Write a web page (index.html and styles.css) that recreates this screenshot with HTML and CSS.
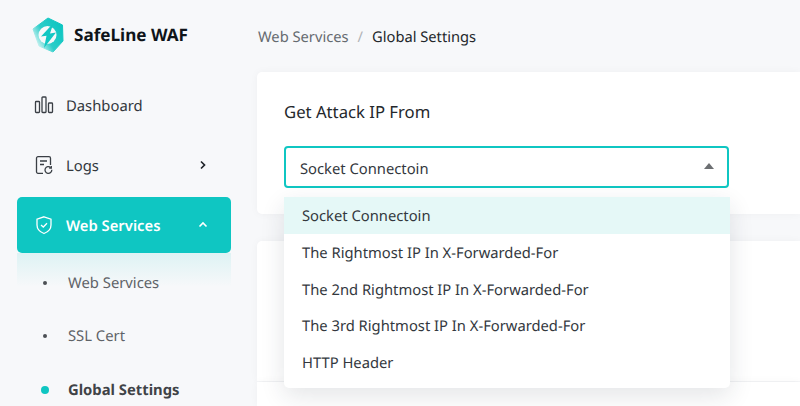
FILE: index.html
```html
<!DOCTYPE html>
<html lang="en">
<head>
<meta charset="utf-8">
<title>SafeLine WAF</title>
<link rel="stylesheet" href="styles.css">
</head>
<body>
<div class="app">
  <aside class="sidebar">
    <div class="brand">
      <svg class="logo" width="32" height="36" viewBox="0 0 32 36">
        <defs>
          <linearGradient id="lg" x1="0.85" y1="0.2" x2="0.05" y2="0.75">
            <stop offset="0" stop-color="#0fc6c2"/>
            <stop offset="0.55" stop-color="#2bcdc9"/>
            <stop offset="1" stop-color="#e3f8f7"/>
          </linearGradient>
          <linearGradient id="lg2" x1="0" y1="0.2" x2="1" y2="0.8">
            <stop offset="0" stop-color="#0fc6c2"/>
            <stop offset="1" stop-color="#16c8c4"/>
          </linearGradient>
        </defs>
        <path d="M16 1 L30.500 8 L31 24 L21 35 L7 29 L1 12 Z" fill="url(#lg)" stroke="url(#lg)" stroke-linejoin="round" stroke-width="1"/>
        <circle cx="15.500" cy="18" r="9" fill="#f7f8fa"/>
        <path d="M21.500 6 L9 19.500 L14.500 18.800 L12 31 L24 15.500 L18 16.500 Z" fill="url(#lg2)"/>
      </svg>
      <span class="brand-name">SafeLine WAF</span>
    </div>
    <nav class="nav">
      <div class="nav-item">
        <svg class="nav-icon" width="20" height="20" viewBox="0 0 20 20" fill="none" stroke="#3a3f45" stroke-width="1.300">
          <rect x="1.500" y="6.500" width="4" height="11" rx="0.800"/>
          <rect x="8" y="2" width="4" height="15.500" rx="0.800"/>
          <rect x="14.500" y="8" width="4" height="9.500" rx="0.800"/>
        </svg>
        <span class="nav-label">Dashboard</span>
      </div>
      <div class="nav-item">
        <svg class="nav-icon" width="20" height="20" viewBox="0 0 20 20" fill="none" stroke="#3a3f45" stroke-width="1.300">
          <path d="M9 18.300 H4 a1.500 1.500 0 0 1 -1.500 -1.500 V3.200 a1.500 1.500 0 0 1 1.500 -1.500 H15 a1.500 1.500 0 0 1 1.500 1.500 V10"/>
          <path d="M6 6 H13 M6 9.500 H10"/>
          <path d="M17.800 14.800 a3.400 3.400 0 1 1 -1.200 -2.400"/>
          <path d="M17.300 10.900 V13 H15.200"/>
        </svg>
        <span class="nav-label">Logs</span>
        <svg class="chev" width="10" height="10" viewBox="0 0 10 10" fill="none" stroke="#1f2329" stroke-width="1.700"><path d="M3 1.500 L6.500 5 L3 8.500"/></svg>
      </div>
      <div class="nav-item nav-active">
        <svg class="nav-icon" width="20" height="20" viewBox="0 0 20 20" fill="none" stroke="#fff" stroke-width="1.300">
          <path d="M10 1.800 L17 4.200 V10 C17 14.200 14 17 10 18.500 C6 17 3 14.200 3 10 V4.200 Z"/>
          <path d="M7 10 L9.300 12 L13 8.300"/>
        </svg>
        <span class="nav-label">Web Services</span>
        <svg class="chev" width="10" height="10" viewBox="0 0 10 10" fill="none" stroke="#fff" stroke-width="1.600"><path d="M1.500 6.500 L5 3 L8.500 6.500"/></svg>
      </div>
      <div class="sub-list">
        <div class="sub-item"><span class="dot"></span><span>Web Services</span></div>
        <div class="sub-item"><span class="dot"></span><span>SSL Cert</span></div>
        <div class="sub-item sub-current"><span class="dot"></span><span>Global Settings</span></div>
      </div>
    </nav>
  </aside>
  <main class="main">
    <div class="crumbs">
      <span class="crumb-link">Web Services</span>
      <span class="crumb-sep">/</span>
      <span class="crumb-now">Global Settings</span>
    </div>
    <section class="card card-first">
      <h2 class="card-title">Get Attack IP From</h2>
      <div class="select">
        <span>Socket Connectoin</span>
        <span class="caret"></span>
      </div>
      <ul class="menu">
        <li class="menu-item menu-selected">Socket Connectoin</li>
        <li class="menu-item">The Rightmost IP In X-Forwarded-For</li>
        <li class="menu-item">The 2nd Rightmost IP In X-Forwarded-For</li>
        <li class="menu-item">The 3rd Rightmost IP In X-Forwarded-For</li>
        <li class="menu-item">HTTP Header</li>
      </ul>
    </section>
    <section class="card card-second"></section>
    <section class="card card-third"></section>
  </main>
</div>
</body>
</html>
```
FILE: styles.css
```css
* { box-sizing: border-box; }
html, body { margin: 0; height: 100%; }
body {
  width: 800px;
  height: 406px;
  overflow: hidden;
  background: #f7f8fa;
  font-family: "Noto Sans", sans-serif;
  text-rendering: geometricPrecision;
  color: #33383e;
}
.app { display: flex; height: 406px; overflow: hidden; }
.sidebar { width: 257px; flex: none; padding-left: 17px; }
.brand { display: flex; align-items: center; height: 75px; padding: 0 0 5px 15px; }
.brand-name {
  margin-left: 10px;
  font-size: 17.100px;
  font-weight: 700;
  color: #0f1419;
}
.nav { width: 214px; }
.nav-item {
  position: relative;
  display: flex;
  align-items: center;
  height: 60px;
  padding-left: 17px;
  font-size: 14.800px;
  color: #33383e;
}
.nav-label { margin-left: 12px; padding-top: 2px; }
.chev { position: absolute; left: 181px; top: 25px; }
.nav-active {
  height: 56px;
  margin-top: 2px;
  background: #0fc6c2;
  border-radius: 5px;
  color: #fff;
  font-weight: 600;
}
.nav-active .chev { top: 23px; }
.sub-list {
  padding-top: 2px;
  background: linear-gradient(rgba(15, 198, 194, 0.11), rgba(15, 198, 194, 0) 34px);
}
.sub-item {
  display: flex;
  align-items: center;
  height: 53.500px;
  padding: 2px 0 0 26px;
  font-size: 14.800px;
  color: #5f6368;
}
.dot { width: 4px; height: 4px; margin-right: 21px; border-radius: 50%; background: #4c5054; }
.sub-current { color: #3f4347; font-weight: 700; }
.sub-current .dot { width: 8px; height: 8px; margin-left: -2px; margin-right: 19px; background: #0fc6c2; }
.main { position: relative; flex: 1; min-width: 0; }
.crumbs { display: flex; align-items: center; height: 72px; padding: 2px 0 0 1px; font-size: 14.700px; }
.crumb-link { color: #666b70; }
.crumb-sep { margin: 0 9px; color: #b0b3b6; }
.crumb-now { color: #24282c; }
.card { background: #fff; box-shadow: 0 0 8px rgba(30, 40, 60, 0.04); }
.card-first {
  position: relative;
  height: 142px;
  padding: 27px 27px 0;
  border-radius: 5px 0 0 5px;
}
.card-title { margin: 0 0 21px; font-size: 16.700px; line-height: 26px; font-weight: 400; color: #24282c; }
.select {
  position: relative;
  display: flex;
  align-items: center;
  width: 445px;
  height: 42px;
  padding: 4px 0 0 14px;
  border: 2px solid #0fc6c2;
  border-radius: 4px;
  font-size: 14.750px;
  color: #33383e;
}
.caret {
  position: absolute;
  right: 13px;
  top: 15px;
  border-left: 5.500px solid transparent;
  border-right: 5.500px solid transparent;
  border-bottom: 6px solid #6c6f72;
}
.menu {
  position: absolute;
  z-index: 2;
  left: 27px;
  top: 125px;
  width: 446px;
  height: 191px;
  margin: 0;
  padding: 0;
  list-style: none;
  background: #fff;
  border-radius: 5px;
  box-shadow: 0 8px 24px rgba(30, 40, 60, 0.12);
}
.menu-item {
  display: flex;
  align-items: center;
  height: 36.700px;
  padding: 2px 0 0 18px;
  font-size: 14.750px;
  color: #33383e;
}
.menu-selected { background: #e5f8f7; }
.card-second { height: 140px; margin-top: 27px; border-radius: 5px 0 0 0; }
.card-third { height: 24px; margin-top: 1px; }
```
